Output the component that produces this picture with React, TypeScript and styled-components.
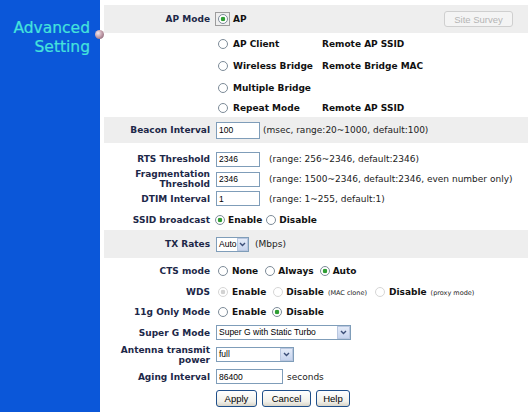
import React from 'react'
import styled, { createGlobalStyle } from 'styled-components'

const GlobalStyle = createGlobalStyle`
  html, body {
    margin: 0;
    padding: 0;
    background: #fff;
  }
  body {
    font-family: "DejaVu Sans", Verdana, sans-serif;
  }
`

const Page = styled.div`
  display: flex;
  width: 530px;
  height: 414px;
  overflow: hidden;
`
const Sidebar = styled.div`
  position: relative;
  flex-shrink: 0;
  width: 100px;
  height: 412px;
  box-sizing: border-box;
  padding: 19px 10px 0 0;
  background: #0b57d9;
`
const Title = styled.div`
  color: #45e3dc;
  font-size: 15.5px;
  line-height: 19px;
  text-align: right;
  -webkit-text-stroke: 0.2px #45e3dc;
`
const Knob = styled.span`
  position: absolute;
  right: -4px;
  top: 30px;
  width: 9px;
  height: 9px;
  border-radius: 50%;
  background: radial-gradient(circle at 35% 35%, #f6eaf0, #b8919f 55%, #6e4f5d);
`
const Main = styled.div`
  flex: 1;
  padding: 5px 2px 0 4px;
`
const Row = styled.div<{ $h: number; $shaded?: boolean; $mt?: number }>`
  display: grid;
  grid-template-columns: 110px 1fr;
  align-items: center;
  height: ${({ $h }) => $h}px;
  margin-top: ${({ $mt }) => $mt ?? 0}px;
  background: ${({ $shaded }) => ($shaded ? '#eeeeee' : 'transparent')};
`
const Label = styled.div`
  padding-right: 4px;
  text-align: right;
  font-size: 9px;
  font-weight: bold;
  line-height: 10px;
  color: #1d2848;
  white-space: nowrap;
`
const Field = styled.div`
  display: flex;
  align-items: center;
  padding-left: 2px;
  white-space: nowrap;
`
const FocusBox = styled.span`
  display: inline-flex;
  align-items: center;
  justify-content: center;
  box-sizing: border-box;
  width: 15px;
  height: 14px;
  margin-left: -1px;
  border: 1px solid #9c9c9c;
`
const Radio = styled.span<{ $on?: boolean; $off?: boolean }>`
  display: inline-block;
  flex-shrink: 0;
  box-sizing: border-box;
  width: 10px;
  height: 10px;
  border-radius: 50%;
  border: 1px solid ${({ $off }) => ($off ? '#d6d6d6' : '#7d8b98')};
  background: ${({ $on, $off }) =>
    $on
      ? `radial-gradient(circle, ${$off ? '#d2d2d2' : '#2f9e34'} 0 2px, #fff 2.6px)`
      : '#fff'};
`
const Choice = styled.span<{ $ml?: number; $mr?: number; $gap?: number }>`
  display: inline-flex;
  align-items: center;
  gap: ${({ $gap }) => $gap ?? 4}px;
  margin-left: ${({ $ml }) => $ml ?? 2}px;
  margin-right: ${({ $mr }) => $mr ?? 6}px;
`
const ModeCell = styled.span`
  display: inline-flex;
  align-items: center;
  gap: 5px;
  width: 104px;
  padding-left: 2px;
`
const OptText = styled.span<{ $ml?: number }>`
  margin-left: ${({ $ml }) => $ml ?? 0}px;
  font-size: 9px;
  font-weight: bold;
  color: #111;
`
const Note = styled.span<{ $ml?: number }>`
  margin-left: ${({ $ml }) => $ml ?? 0}px;
  font-size: 9px;
  color: #222;
`
const Tiny = styled.span`
  margin-left: 4px;
  font-size: 6.5px;
  font-weight: normal;
  color: #222;
`
const TextBox = styled.input<{ $w: number; $h?: number }>`
  box-sizing: border-box;
  width: ${({ $w }) => $w}px;
  height: ${({ $h }) => $h ?? 15}px;
  margin: 0;
  padding: 0 2px;
  border: 1px solid #7f9db9;
  outline: none;
  background: #fff;
  font-family: "Liberation Sans", Arial, sans-serif;
  font-size: 8.5px;
  color: #000;
`
const SelectBox = styled.div<{ $w: number }>`
  display: flex;
  box-sizing: border-box;
  width: ${({ $w }) => $w}px;
  height: 15px;
  border: 1px solid #7f9db9;
  background: #fff;
`
const SelectText = styled.span`
  flex: 1;
  padding-left: 2px;
  font-family: "Liberation Sans", Arial, sans-serif;
  font-size: 8.5px;
  line-height: 13px;
  color: #000;
`
const DropBtn = styled.span`
  display: flex;
  align-items: center;
  justify-content: center;
  box-sizing: border-box;
  width: 13px;
  border: 1px solid #b9c7e0;
  background: linear-gradient(#e4ebf8, #c7d4ee);
`
const Btn = styled.button<{ $w: number; $ml?: number }>`
  box-sizing: border-box;
  width: ${({ $w }) => $w}px;
  height: 17px;
  margin: 0 0 0 ${({ $ml }) => $ml ?? 0}px;
  padding: 0;
  border: 1px solid #1f4f8a;
  border-radius: 3px;
  background: linear-gradient(#ffffff, #f1f0ea 70%, #d9d5c8);
  font-family: "Liberation Sans", Arial, sans-serif;
  font-size: 9.5px;
  color: #000;
`
const SurveyBtn = styled.button`
  box-sizing: border-box;
  width: 69px;
  height: 16px;
  margin: 0 15px 0 auto;
  padding: 0;
  border: 1px solid #cfcfcf;
  border-radius: 3px;
  background: #f4f4f4;
  font-family: "Liberation Sans", Arial, sans-serif;
  font-size: 9.5px;
  color: #b4b4b4;
`

function Chevron() {
  return (
    <svg width="7" height="5" viewBox="0 0 7 5">
      <polyline points="1,1 3.5,3.5 6,1" fill="none" stroke="#3c4f78" strokeWidth="1.4" />
    </svg>
  )
}

function Select({ w, value }: { w: number; value: string }) {
  return (
    <SelectBox $w={w}>
      <SelectText>{value}</SelectText>
      <DropBtn>
        <Chevron />
      </DropBtn>
    </SelectBox>
  )
}

const modes = [
  { name: 'AP Client', extra: 'Remote AP SSID', h: 22 },
  { name: 'Wireless Bridge', extra: 'Remote Bridge MAC', h: 22 },
  { name: 'Multiple Bridge', extra: '', h: 21 },
  { name: 'Repeat Mode', extra: 'Remote AP SSID', h: 19 },
]

function App() {
  return (
    <Page>
      <GlobalStyle />
      <Sidebar>
        <Title>Advanced</Title>
        <Title>Setting</Title>
        <Knob />
      </Sidebar>
      <Main>
        <Row $h={28} $shaded>
          <Label>AP Mode</Label>
          <Field>
            <FocusBox>
              <Radio $on />
            </FocusBox>
            <OptText $ml={3}>AP</OptText>
            <SurveyBtn disabled>Site Survey</SurveyBtn>
          </Field>
        </Row>
        {modes.map((m) => (
          <Row key={m.name} $h={m.h}>
            <Label />
            <Field>
              <ModeCell>
                <Radio />
                <OptText>{m.name}</OptText>
              </ModeCell>
              <OptText>{m.extra}</OptText>
            </Field>
          </Row>
        ))}
        <Row $h={26} $shaded>
          <Label>Beacon Interval</Label>
          <Field>
            <TextBox $w={44} $h={17} defaultValue="100" />
            <Note $ml={3}>(msec, range:20~1000, default:100)</Note>
          </Field>
        </Row>
        <Row $h={20} $mt={6}>
          <Label>RTS Threshold</Label>
          <Field>
            <TextBox $w={44} defaultValue="2346" />
            <Note $ml={9}>(range: 256~2346, default:2346)</Note>
          </Field>
        </Row>
        <Row $h={19}>
          <Label>
            Fragmentation
            <br />
            Threshold
          </Label>
          <Field>
            <TextBox $w={44} defaultValue="2346" />
            <Note $ml={9}>(range: 1500~2346, default:2346, even number only)</Note>
          </Field>
        </Row>
        <Row $h={21}>
          <Label>DTIM Interval</Label>
          <Field>
            <TextBox $w={44} defaultValue="1" />
            <Note $ml={9}>(range: 1~255, default:1)</Note>
          </Field>
        </Row>
        <Row $h={21}>
          <Label>SSID broadcast</Label>
          <Field>
            <Choice $ml={-1} $mr={4} $gap={3}>
              <Radio $on />
              <OptText>Enable</OptText>
            </Choice>
            <Choice $ml={0} $gap={3}>
              <Radio />
              <OptText>Disable</OptText>
            </Choice>
          </Field>
        </Row>
        <Row $h={28} $shaded>
          <Label>TX Rates</Label>
          <Field>
            <Select w={33} value="Auto" />
            <Note $ml={6}>(Mbps)</Note>
          </Field>
        </Row>
        <Row $h={22} $mt={2}>
          <Label>CTS mode</Label>
          <Field>
            <Choice $mr={7}>
              <Radio />
              <OptText>None</OptText>
            </Choice>
            <Choice $ml={0} $gap={3}>
              <Radio />
              <OptText>Always</OptText>
            </Choice>
            <Choice $ml={0} $gap={3}>
              <Radio $on />
              <OptText>Auto</OptText>
            </Choice>
          </Field>
        </Row>
        <Row $h={19}>
          <Label>WDS</Label>
          <Field>
            <Choice $mr={7}>
              <Radio $on $off />
              <OptText>Enable</OptText>
            </Choice>
            <Choice $ml={0} $mr={8} $gap={3}>
              <Radio $off />
              <OptText>
                Disable<Tiny>(MAC clone)</Tiny>
              </OptText>
            </Choice>
            <Choice $ml={0} $gap={4}>
              <Radio $off />
              <OptText>
                Disable<Tiny>(proxy mode)</Tiny>
              </OptText>
            </Choice>
          </Field>
        </Row>
        <Row $h={22}>
          <Label>11g Only Mode</Label>
          <Field>
            <Choice $mr={6}>
              <Radio />
              <OptText>Enable</OptText>
            </Choice>
            <Choice $ml={0}>
              <Radio $on />
              <OptText>Disable</OptText>
            </Choice>
          </Field>
        </Row>
        <Row $h={19}>
          <Label>Super G Mode</Label>
          <Field>
            <Select w={135} value="Super G with Static Turbo" />
          </Field>
        </Row>
        <Row $h={25}>
          <Label>
            Antenna transmit
            <br />
            power
          </Label>
          <Field>
            <Select w={78} value="full" />
          </Field>
        </Row>
        <Row $h={19}>
          <Label>Aging Interval</Label>
          <Field>
            <TextBox $w={67} defaultValue="86400" />
            <Note $ml={4}>seconds</Note>
          </Field>
        </Row>
        <Row $h={24}>
          <Label />
          <Field>
            <Btn $w={41}>Apply</Btn>
            <Btn $w={49} $ml={5}>Cancel</Btn>
            <Btn $w={34} $ml={5}>Help</Btn>
          </Field>
        </Row>
      </Main>
    </Page>
  )
}

export default App
